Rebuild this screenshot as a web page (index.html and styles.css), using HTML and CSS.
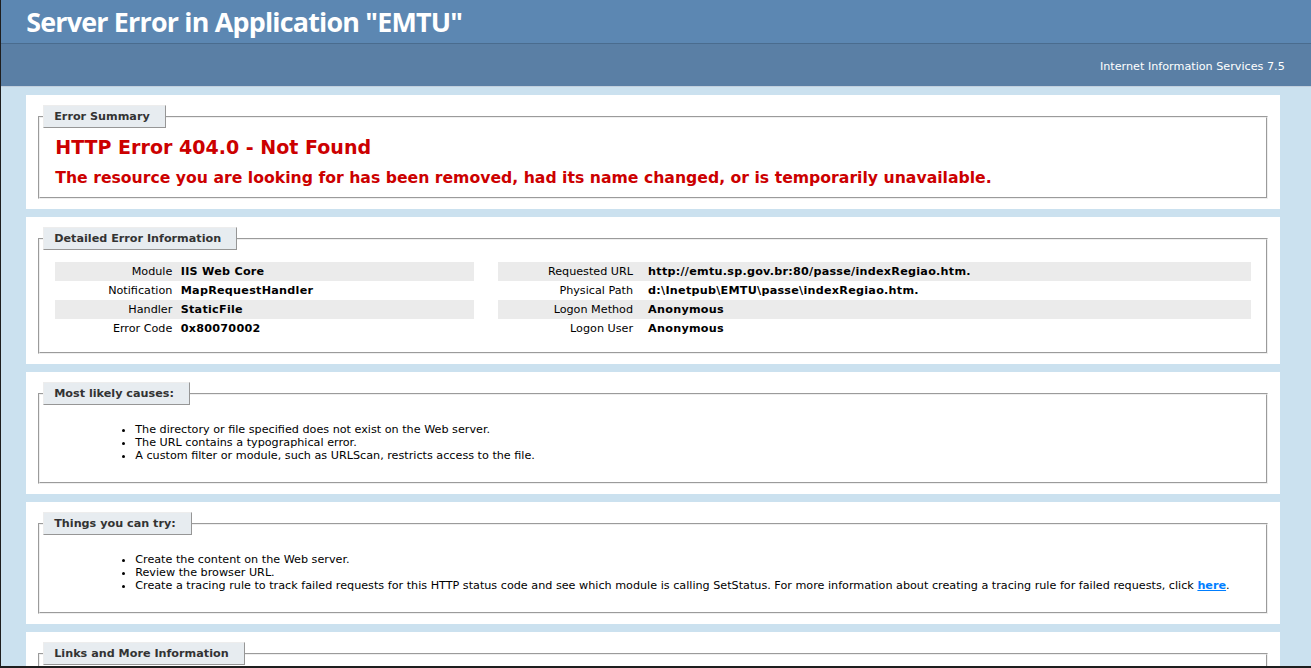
FILE: index.html
```html
<!DOCTYPE html>
<html lang="en">
<head>
<meta charset="utf-8">
<title>IIS 7.5 Detailed Error - 404.0 - Not Found</title>
<link rel="stylesheet" href="styles.css">
</head>
<body>
<div class="header"><h1>Server Error in Application "EMTU"</h1></div>
<div class="server-version"><p>Internet Information Services 7.5</p></div>
<div class="content">
  <div class="content-container">
    <fieldset>
      <legend>Error Summary</legend>
      <h2>HTTP Error 404.0 - Not Found</h2>
      <h3>The resource you are looking for has been removed, had its name changed, or is temporarily unavailable.</h3>
    </fieldset>
  </div>
  <div class="content-container">
    <fieldset>
      <legend>Detailed Error Information</legend>
      <div class="details">
        <div class="details-left">
          <table>
            <tr class="alt"><th>Module</th><td>IIS Web Core</td></tr>
            <tr><th>Notification</th><td>MapRequestHandler</td></tr>
            <tr class="alt"><th>Handler</th><td>StaticFile</td></tr>
            <tr><th>Error Code</th><td>0x80070002</td></tr>
          </table>
        </div>
        <div class="details-right">
          <table>
            <tr class="alt"><th>Requested URL</th><td>http://emtu.sp.gov.br:80/passe/indexRegiao.htm.</td></tr>
            <tr><th>Physical Path</th><td>d:\Inetpub\EMTU\passe\indexRegiao.htm.</td></tr>
            <tr class="alt"><th>Logon Method</th><td>Anonymous</td></tr>
            <tr><th>Logon User</th><td>Anonymous</td></tr>
          </table>
        </div>
      </div>
    </fieldset>
  </div>
  <div class="content-container">
    <fieldset>
      <legend>Most likely causes:</legend>
      <ul>
        <li>The directory or file specified does not exist on the Web server.</li>
        <li>The URL contains a typographical error.</li>
        <li>A custom filter or module, such as URLScan, restricts access to the file.</li>
      </ul>
    </fieldset>
  </div>
  <div class="content-container">
    <fieldset>
      <legend>Things you can try:</legend>
      <ul>
        <li>Create the content on the Web server.</li>
        <li>Review the browser URL.</li>
        <li>Create a tracing rule to track failed requests for this HTTP status code and see which module is calling SetStatus. For more information about creating a tracing rule for failed requests, click <a href="#">here</a>.</li>
      </ul>
    </fieldset>
  </div>
  <div class="content-container">
    <fieldset>
      <legend>Links and More Information</legend>
      This error means that the file or directory does not exist on the server. Create the file or directory and try the request again.
      <p><a href="#">View more information &raquo;</a></p>
    </fieldset>
  </div>
</div>
<div class="frame"></div>
</body>
</html>
```
FILE: styles.css
```css
body {
  margin: 0;
  font-size: 11.2px;
  font-family: "DejaVu Sans", Verdana, sans-serif;
  background: #CBE1EF;
}
ul {
  margin: 10px 0 10px 40px;
}
fieldset {
  padding: 0 15px 10px 15px;
}
legend {
  color: #333333;
  padding: 4px 15px 4px 10px;
  margin: 4px 0 8px -12px;
  border-top: 1px solid #EDEDED;
  border-left: 1px solid #EDEDED;
  border-right: 1px solid #969696;
  border-bottom: 1px solid #969696;
  background: #E7ECF0;
  font-weight: bold;
  font-size: 1em;
}
a:link, a:visited {
  color: #007EFF;
  font-weight: bold;
}
h1 {
  font-family: "Open Sans", "DejaVu Sans", sans-serif;
  font-size: 26.88px;
  letter-spacing: -0.8px;
  margin: 0;
  color: #FFF;
  line-height: 31px;
}
h2 {
  font-size: 19.04px;
  margin: 0;
  color: #CC0000;
}
h3 {
  font-size: 15.68px;
  margin: 10px 0 0 0;
  color: #CC0000;
}
.header {
  width: 96%;
  padding: 6px 2%;
  color: #FFF;
  background-color: #5C87B2;
}
.content {
  margin: 0 0 0 2%;
}
.content-container {
  background: #FFF;
  width: 96%;
  margin-top: 8px;
  padding: 10px;
}
.content-container p {
  margin: 0 0 10px 0;
}
.details {
  display: flex;
  align-items: flex-start;
}
.details-left {
  width: 35%;
  margin-right: 2%;
}
.details-right {
  width: 63%;
  overflow: hidden;
}
.details td {
  letter-spacing: 0.25px;
}
.server-version {
  width: 96%;
  min-height: 1px;
  margin: 0 0 5px 0;
  padding: 11px 2% 8px 2%;
  background-color: #5A7FA5;
  border-bottom: 1px solid #C1CFDD;
  border-top: 1px solid #4A6C8E;
  font-size: 1em;
  color: #FFF;
  text-align: right;
}
.server-version p {
  margin: 5px 0;
}
table {
  margin: 4px 0;
  width: 100%;
  border: none;
  border-collapse: collapse;
  font-size: 1em;
}
td, th {
  vertical-align: top;
  padding: 3px 0;
  text-align: left;
  font-weight: bold;
  border: none;
}
th {
  width: 30%;
  text-align: right;
  padding-right: 2%;
  font-weight: normal;
}
.details-right th {
  width: 20%;
}
tr.alt td, tr.alt th {
  background-color: #EBEBEB;
}
.frame {
  position: fixed;
  left: 0;
  top: 0;
  right: 0;
  bottom: 0;
  border-left: 1px solid #1e1e1e;
  border-bottom: 2px solid #1e1e1e;
  pointer-events: none;
}
```
